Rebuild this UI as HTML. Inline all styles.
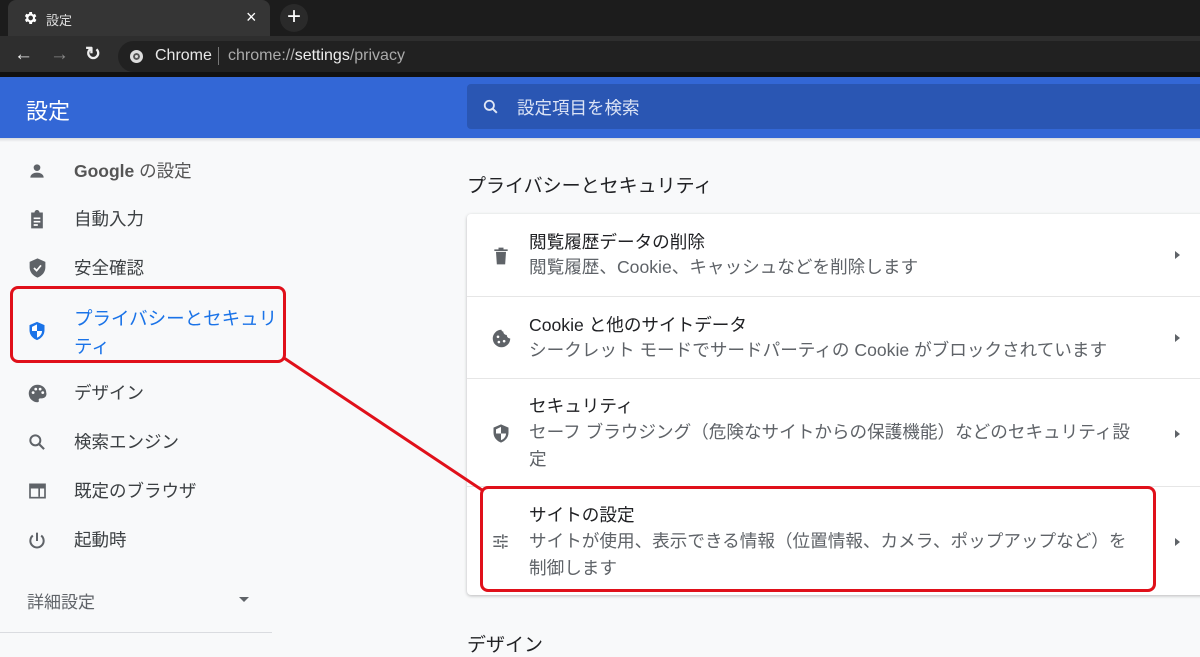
<!DOCTYPE html>
<html><head><meta charset="utf-8"><style>
*{margin:0;padding:0;box-sizing:border-box}
body{width:1200px;height:656px;overflow:hidden;background:#f8f9fa;font-family:"Liberation Sans","Noto Sans CJK JP",sans-serif;position:relative}
.abs{position:absolute}
.side{position:absolute;left:74px;font-size:17.5px;color:#3c4043;line-height:20px}
.ic{position:absolute;left:27px}
.row{position:absolute;left:0;right:0;border-top:1px solid #e6e6e6}
.t{position:absolute;left:62px;font-size:17.6px;color:#202124;line-height:20px;white-space:nowrap}
.s{position:absolute;left:62px;font-size:17.6px;color:#5f6368;line-height:27px;white-space:nowrap}
.arr{position:absolute;left:708px;width:0;height:0;border-top:4px solid transparent;border-bottom:4px solid transparent;border-left:5px solid #5f6368}
.ri{position:absolute;left:24px}
</style></head><body>
<div class="abs" style="left:0;top:0;width:1200px;height:36px;background:#1c1c1c"></div>
<div class="abs" style="left:8px;top:0;width:262px;height:36px;background:#353535;border-radius:8px 8px 0 0"></div>
<svg class="abs" style="left:22px;top:10px" width="16" height="16" viewBox="0 0 24 24"><path fill="#fff" d="M19.4 13a7.5 7.5 0 000-2l2.1-1.6-2-3.5-2.5 1a7.6 7.6 0 00-1.7-1L15 3h-4l-.4 2.6a7.6 7.6 0 00-1.7 1l-2.5-1-2 3.5L6.5 11a7.5 7.5 0 000 2l-2.1 1.6 2 3.5 2.5-1c.5.4 1.1.7 1.7 1L11 21h4l.4-2.6c.6-.3 1.2-.6 1.7-1l2.5 1 2-3.5zM13 15.5a3.5 3.5 0 110-7 3.5 3.5 0 010 7z"/></svg>
<div class="abs" style="left:46px;top:10px;font-size:13px;color:#ddd">設定</div>
<div class="abs" style="left:246px;top:7px;font-size:18px;color:#fff">×</div>
<div class="abs" style="left:280px;top:4px;width:28px;height:28px;border-radius:50%;background:#2a2a2a;color:#fff;font-size:24px;text-align:center;line-height:26px">+</div>
<div class="abs" style="left:0;top:36px;width:1200px;height:36px;background:#2e2e2e"></div>
<div class="abs" style="left:0;top:72px;width:1200px;height:5px;background:#111"></div>
<div class="abs" style="left:14px;top:44px;font-size:19px;color:#eee">←</div>
<div class="abs" style="left:50px;top:44px;font-size:19px;color:#888">→</div>
<div class="abs" style="left:85px;top:43px;font-size:19px;color:#eee;font-weight:bold">↻</div>
<div class="abs" style="left:118px;top:41px;width:1100px;height:31px;background:#212121;border-radius:16px"></div>
<div class="abs" style="left:130px;top:50px;width:13px;height:13px;border-radius:50%;background:#ddd;border:3px solid #ddd;box-shadow:inset 0 0 0 2px #555"></div>
<div class="abs" style="left:155px;top:47px;font-size:16px;color:#e8e8e8">Chrome</div>
<div class="abs" style="left:218px;top:47px;width:1px;height:18px;background:#777"></div>
<div class="abs" style="left:228px;top:47px;font-size:16px;color:#aaa">chrome://<span style="color:#eee">settings</span>/privacy</div>
<div class="abs" style="left:0;top:77px;width:1200px;height:61px;background:#3367d6"></div>
<div class="abs" style="left:26px;top:94px;font-size:22px;color:#fff">設定</div>
<div class="abs" style="left:467px;top:84px;width:733px;height:45px;background:#2a56b3;border-radius:4px 0 0 4px"></div>
<svg class="abs" style="left:481px;top:97px" width="20" height="20" viewBox="0 0 24 24"><circle cx="10" cy="10" r="5.5" stroke="#dfe6f5" stroke-width="2.2" fill="none"/><path d="M14 14l5 5" stroke="#dfe6f5" stroke-width="2.4"/></svg>
<div class="abs" style="left:517px;top:95px;font-size:17.5px;color:#dbe3f5">設定項目を検索</div>
<div class="abs" style="left:0;top:138px;width:1200px;height:4px;background:linear-gradient(#d8dade,#f8f9fa)"></div>

<svg class="ic" style="top:161px" width="20" height="20" viewBox="0 0 24 24"><circle cx="12" cy="8" r="4" fill="#5f6368"/><path d="M4 20c0-4 4-6 8-6s8 2 8 6z" fill="#5f6368"/></svg>
<div class="side" style="top:161px;font-weight:bold;color:#555">Google <span style="font-weight:normal">の設定</span></div>
<svg class="ic" style="top:209px" width="20" height="22" viewBox="0 0 24 24"><path d="M5 3h4a3 3 0 016 0h4v19H5z" fill="#5f6368"/><path d="M8 10h8M8 14h8M8 18h5" stroke="#fff" stroke-width="2"/></svg>
<div class="side" style="top:209px">自動入力</div>
<svg class="ic" style="top:257px" width="21" height="22" viewBox="0 0 24 24"><path d="M12 1L3 5v6c0 6 4 10 9 12 5-2 9-6 9-12V5z" fill="#5f6368"/><path d="M8 12l3 3 5-6" stroke="#fff" stroke-width="2" fill="none"/></svg>
<div class="side" style="top:258px">安全確認</div>
<svg class="ic" style="top:320px" width="20" height="22" viewBox="0 0 24 24"><path d="M12 1L3 5v6c0 6 4 10 9 12 5-2 9-6 9-12V5z" fill="#1a73e8"/><path d="M12 4v8H6V7zM12 12h6c0 4-3 7-6 8z" fill="#fff"/></svg>
<div class="side" style="top:305px;color:#1a73e8;line-height:28px;font-size:18.5px">プライバシーとセキュリ<br>ティ</div>
<svg class="ic" style="top:383px" width="21" height="21" viewBox="0 0 24 24"><path d="M12 2a10 10 0 000 20c1 0 2-1 1.5-2-.6-1 .2-2.5 1.5-2.5h2A5 5 0 0022 11C22 6 17.5 2 12 2z" fill="#5f6368"/><circle cx="7" cy="11" r="1.6" fill="#fff"/><circle cx="10" cy="7" r="1.6" fill="#fff"/><circle cx="15" cy="7" r="1.6" fill="#fff"/><circle cx="18" cy="11" r="1.6" fill="#fff"/></svg>
<div class="side" style="top:383px">デザイン</div>
<svg class="ic" style="top:432px" width="20" height="20" viewBox="0 0 24 24"><circle cx="10" cy="10" r="6" stroke="#5f6368" stroke-width="2.4" fill="none"/><path d="M14.5 14.5l6 6" stroke="#5f6368" stroke-width="2.6"/></svg>
<div class="side" style="top:432px">検索エンジン</div>
<svg class="ic" style="top:481px" width="21" height="20" viewBox="0 0 24 24"><rect x="2" y="3" width="20" height="18" fill="#5f6368"/><rect x="4" y="9" width="16" height="10" fill="#f8f9fa"/><rect x="13" y="9" width="2" height="10" fill="#5f6368"/></svg>
<div class="side" style="top:481px">既定のブラウザ</div>
<svg class="ic" style="top:530px" width="20" height="22" viewBox="0 0 24 24"><path d="M12 2v10" stroke="#5f6368" stroke-width="2.4"/><path d="M7 5.5a8 8 0 1010 0" stroke="#5f6368" stroke-width="2.4" fill="none"/></svg>
<div class="side" style="top:530px">起動時</div>
<div class="abs" style="left:27px;top:588px;font-size:17px;color:#5f6368">詳細設定</div>
<div class="abs" style="left:239px;top:597px;border-left:5px solid transparent;border-right:5px solid transparent;border-top:5px solid #5f6368"></div>
<div class="abs" style="left:0;top:632px;width:272px;height:1px;background:#dadce0"></div>

<div class="abs" style="left:467px;top:171px;font-size:19px;color:#202124">プライバシーとセキュリティ</div>
<div class="abs" style="left:467px;top:214px;width:740px;height:381px;background:#fff;box-shadow:0 1px 3px rgba(0,0,0,.25);border-radius:4px">
 <div class="row" style="top:0;height:82px;border-top:none">
  <svg class="ri" style="top:31px" width="20" height="22" viewBox="0 0 24 24"><path d="M6 7h12l-1 15H7zM4 4h16v2H4zM9 2h6v2H9z" fill="#5f6368"/></svg>
  <div class="t" style="top:18px">閲覧履歴データの削除</div>
  <div class="s" style="top:40px">閲覧履歴、Cookie、キャッシュなどを削除します</div>
  <div class="arr" style="top:37px"></div>
 </div>
 <div class="row" style="top:82px;height:82px">
  <svg class="ri" style="top:31px" width="21" height="21" viewBox="0 0 24 24"><path d="M12 2a10 10 0 1010 10 4 4 0 01-4-4 4 4 0 01-4-4 2 2 0 01-2-2z" fill="#5f6368"/><circle cx="8" cy="10" r="1.5" fill="#fff"/><circle cx="9" cy="16" r="1.5" fill="#fff"/><circle cx="15" cy="15" r="1.5" fill="#fff"/></svg>
  <div class="t" style="top:18px">Cookie と他のサイトデータ</div>
  <div class="s" style="top:40px">シークレット モードでサードパーティの Cookie がブロックされています</div>
  <div class="arr" style="top:37px"></div>
 </div>
 <div class="row" style="top:164px;height:108px">
  <svg class="ri" style="top:43px" width="20" height="23" viewBox="0 0 24 24"><path d="M12 1L3 5v6c0 6 4 10 9 12 5-2 9-6 9-12V5z" fill="#5f6368"/><path d="M12 4v8H6V7zM12 12h6c0 4-3 7-6 8z" fill="#fff"/></svg>
  <div class="t" style="top:17px">セキュリティ</div>
  <div class="s" style="top:40px">セーフ ブラウジング（危険なサイトからの保護機能）などのセキュリティ設<br>定</div>
  <div class="arr" style="top:51px"></div>
 </div>
 <div class="row" style="top:272px;height:109px">
  <svg class="ri" style="top:45px" width="19" height="19" viewBox="0 0 24 24"><path d="M3 6h10M17 6h4M15 3v6M3 12h4M11 12h10M9 9v6M3 18h10M17 18h4M15 15v6" stroke="#5f6368" stroke-width="2"/></svg>
  <div class="t" style="top:18px">サイトの設定</div>
  <div class="s" style="top:41px">サイトが使用、表示できる情報（位置情報、カメラ、ポップアップなど）を<br>制御します</div>
  <div class="arr" style="top:51px"></div>
 </div>
</div>
<div class="abs" style="left:467px;top:630px;font-size:19px;color:#202124">デザイン</div>

<div class="abs" style="left:10px;top:286px;width:276px;height:77px;border:3px solid #e0101a;border-radius:8px"></div>
<div class="abs" style="left:480px;top:486px;width:676px;height:106px;border:3px solid #e0101a;border-radius:8px"></div>
<svg class="abs" style="left:0;top:0" width="1200" height="656"><line x1="284" y1="358" x2="482" y2="490" stroke="#e0101a" stroke-width="3"/></svg>
</body></html>
